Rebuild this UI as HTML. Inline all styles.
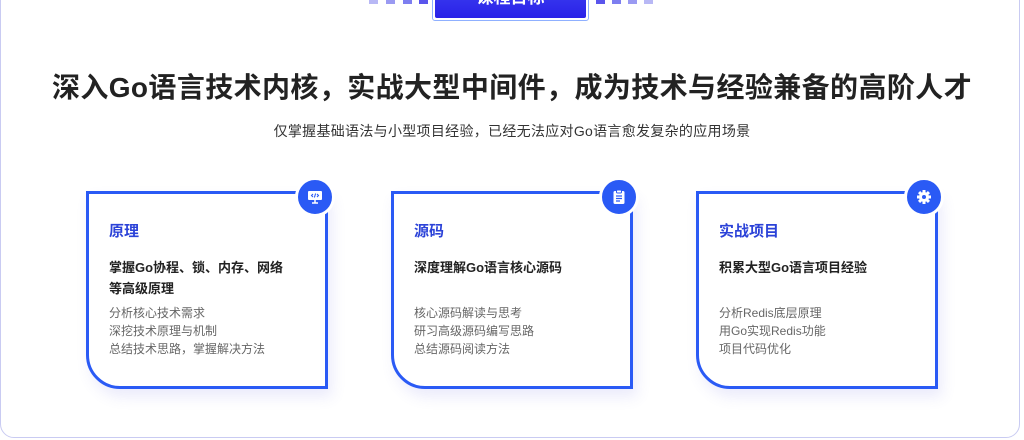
<!DOCTYPE html>
<html><head><meta charset="utf-8"><style>
*{margin:0;padding:0;box-sizing:border-box}
body{width:1024px;height:440px;background:#fff;font-family:"Liberation Sans","Noto Sans CJK SC",sans-serif;position:relative;overflow:hidden}
.outer{position:absolute;left:0;top:-20px;width:1020px;height:458px;border:1.5px solid #c9cbf2;border-radius:14px}
.badge{position:absolute;left:432px;top:-14px;width:157px;height:35px;border:1.5px solid #8fb0ff;border-radius:3px;padding:2px}
.badge div{width:100%;height:100%;background:linear-gradient(#3a3cf0,#2a22e8);border-radius:2px;color:#fff;font-weight:bold;font-size:17px;text-align:center;line-height:18px}
.dash{position:absolute;top:0;height:4px;width:9px}
h1{position:absolute;left:0;width:1024px;top:66px;text-align:center;font-size:28px;font-weight:bold;color:#222;letter-spacing:0.4px}
.sub{position:absolute;left:0;width:1024px;top:121px;text-align:center;font-size:14px;color:#333;letter-spacing:0.3px}
.card{position:absolute;top:191px;width:242px;height:198px;border:3px solid #2a5af5;border-bottom-left-radius:34px;background:#fff;box-shadow:4px 8px 14px rgba(90,90,220,.12)}
.card h3{position:absolute;left:20px;top:26px;font-size:15px;color:#2b42d8;font-weight:bold}
.card .b{position:absolute;left:20px;top:63px;font-size:13px;font-weight:bold;color:#222;line-height:21px;width:210px}
.card .g{position:absolute;left:20px;top:110px;font-size:12px;color:#666;line-height:18px}
.ic{position:absolute;width:40px;height:40px;border-radius:50%;background:#2a5af5;border:3px solid #fff;top:177px}
.ic svg{position:absolute;left:9px;top:9px}
</style></head><body>
<div class="outer"></div>
<div class="dash" style="left:369px;background:#b8b8f5"></div>
<div class="dash" style="left:386px;background:#9a9af2"></div>
<div class="dash" style="left:403px;background:#7d7ef0"></div>
<div class="dash" style="left:419px;background:#5a55ec"></div>
<div class="dash" style="left:596px;background:#5a55ec"></div>
<div class="dash" style="left:612px;background:#7d7ef0"></div>
<div class="dash" style="left:628px;background:#9a9af2"></div>
<div class="dash" style="left:644px;background:#b8b8f5"></div>
<div class="badge"><div>课程目标</div></div>
<h1>深入Go语言技术内核，实战大型中间件，成为技术与经验兼备的高阶人才</h1>
<div class="sub">仅掌握基础语法与小型项目经验，已经无法应对Go语言愈发复杂的应用场景</div>

<div class="card" style="left:86px"><h3>原理</h3><div class="b">掌握Go协程、锁、内存、网络<br>等高级原理</div><div class="g">分析核心技术需求<br>深挖技术原理与机制<br>总结技术思路，掌握解决方法</div></div>
<div class="card" style="left:391px"><h3>源码</h3><div class="b">深度理解Go语言核心源码</div><div class="g">核心源码解读与思考<br>研习高级源码编写思路<br>总结源码阅读方法</div></div>
<div class="card" style="left:696px"><h3>实战项目</h3><div class="b">积累大型Go语言项目经验</div><div class="g">分析Redis底层原理<br>用Go实现Redis功能<br>项目代码优化</div></div>

<div class="ic" style="left:295px"><svg width="16" height="16" viewBox="0 0 16 16"><rect x="1" y="2" width="14" height="9" rx="1" fill="#fff"/><path d="M6 5 4.5 6.5 6 8M10 5l1.5 1.5L10 8M8.6 4.5 7.4 8.5" stroke="#2a5af5" stroke-width="1.1" fill="none"/><path d="M8 11v3M5 14h6" stroke="#fff" stroke-width="1.5"/></svg></div>
<div class="ic" style="left:599px"><svg width="16" height="16" viewBox="0 0 16 16"><rect x="2.5" y="2" width="11" height="13" rx="1.5" fill="#fff"/><rect x="5.5" y="1" width="5" height="3" rx="1" fill="#fff" stroke="#2a5af5" stroke-width="1"/><path d="M5 7h6M5 9.5h6M5 12h4" stroke="#2a5af5" stroke-width="1.3"/></svg></div>
<div class="ic" style="left:904px"><svg width="16" height="16" viewBox="0 0 16 16"><g fill="#fff"><circle cx="8" cy="8" r="5"/><rect x="6.5" y="1" width="3" height="14"/><rect x="1" y="6.5" width="14" height="3"/><rect x="6.5" y="1" width="3" height="14" transform="rotate(45 8 8)"/><rect x="6.5" y="1" width="3" height="14" transform="rotate(-45 8 8)"/></g><circle cx="8" cy="8" r="2" fill="#2a5af5"/></svg></div>
</body></html>
